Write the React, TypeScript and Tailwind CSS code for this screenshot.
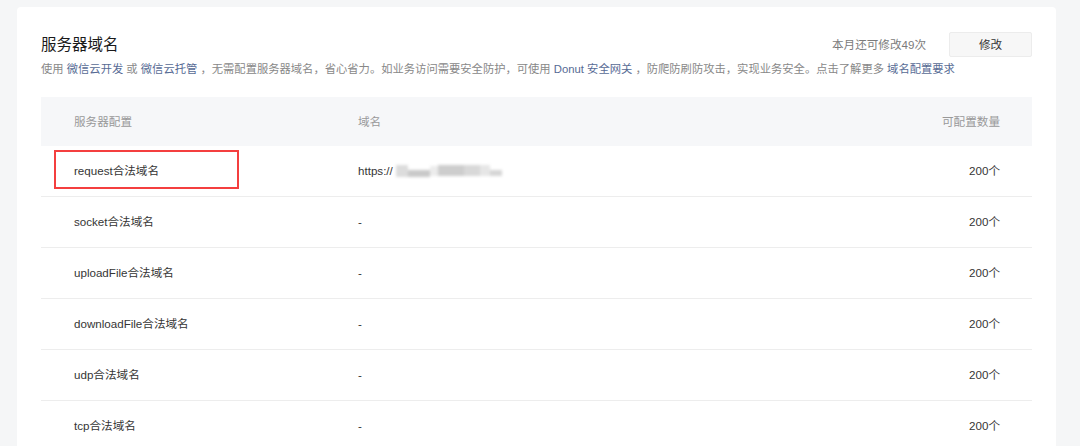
import React from 'react'

const font = { fontFamily: '"Liberation Sans", "Noto Sans CJK SC", sans-serif' }

const rows = [
  { name: 'request合法域名', domain: 'https://', blurred: true },
  { name: 'socket合法域名', domain: '-' },
  { name: 'uploadFile合法域名', domain: '-' },
  { name: 'downloadFile合法域名', domain: '-' },
  { name: 'udp合法域名', domain: '-' },
  { name: 'tcp合法域名', domain: '-' },
]

function Link({ children }: { children: React.ReactNode }) {
  return <span className="text-[#576b95]">{children}</span>
}

function Blur() {
  // pixelated / blurred domain
  return (
    <span className="ml-[3px] inline-flex h-[14px] items-center blur-[1.5px]">
      <span className="h-[12px] w-[12px] bg-[#dcdcdc]" />
      <span className="h-[7px] w-[22px] translate-y-[3px] bg-[#c9c9c9]" />
      <span className="h-[10px] w-[8px] bg-[#ececec]" />
      <span className="h-[11px] w-[26px] bg-[#cdcdcd]" />
      <span className="h-[11px] w-[16px] bg-[#d8d8d8]" />
      <span className="h-[11px] w-[10px] bg-[#e6e6e6]" />
      <span className="h-[6px] w-[12px] translate-y-[2px] bg-[#d6d6d6]" />
    </span>
  )
}

export default function App() {
  return (
    <div
      className="h-[446px] overflow-hidden bg-[#f5f6f7] pl-[17px] pr-[24px] pt-[7px] text-[#353535]"
      style={font}
    >
      <div className="rounded-[4px] bg-white px-[24px] pt-[25px] pb-10">
        <div className="flex h-[25px] items-center justify-between">
          <h1 className="text-[15.5px] leading-[25px] font-normal text-[#1a1a1a]">服务器域名</h1>
          <div className="flex items-center">
            <span className="mr-[23px] text-[11.6px] text-[#7b7b7b]">本月还可修改49次</span>
            <button className="h-[25px] w-[83px] rounded-[2px] border border-[#ececec] bg-[#f7f7f7] text-[11.6px] text-[#353535]">
              修改
            </button>
          </div>
        </div>
        <p className="mt-[2px] text-[11.3px] leading-[20px] whitespace-nowrap text-[#888]">
          使用 <Link>微信云开发</Link> 或 <Link>微信云托管</Link> ，无需配置服务器域名，省心省力。如业务访问需要安全防护，可使用{' '}
          <Link>Donut 安全网关</Link> ，防爬防刷防攻击，实现业务安全。点击了解更多 <Link>域名配置要求</Link>
        </p>

        <div className="mt-[18px] text-[11.6px]">
          <div className="flex h-[49px] items-center bg-[#f6f7f9] text-[#999]">
            <div className="w-[317px] pl-[33px]">服务器配置</div>
            <div className="flex-1">域名</div>
            <div className="pr-[32px] text-right">可配置数量</div>
          </div>
          {rows.map((r, i) => (
            <div key={r.name} className="relative flex h-[51px] items-center border-b border-[#ededed]">
              {i === 0 && (
                <div className="absolute top-[4px] left-[13px] h-[39px] w-[185px] border-2 border-[#f43f3f]" />
              )}
              <div className="w-[317px] pl-[33px]">{r.name}</div>
              <div className="flex flex-1 items-center">
                {r.domain}
                {r.blurred && <Blur />}
              </div>
              <div className="pr-[32px] text-right">200个</div>
            </div>
          ))}
        </div>
      </div>
    </div>
  )
}
